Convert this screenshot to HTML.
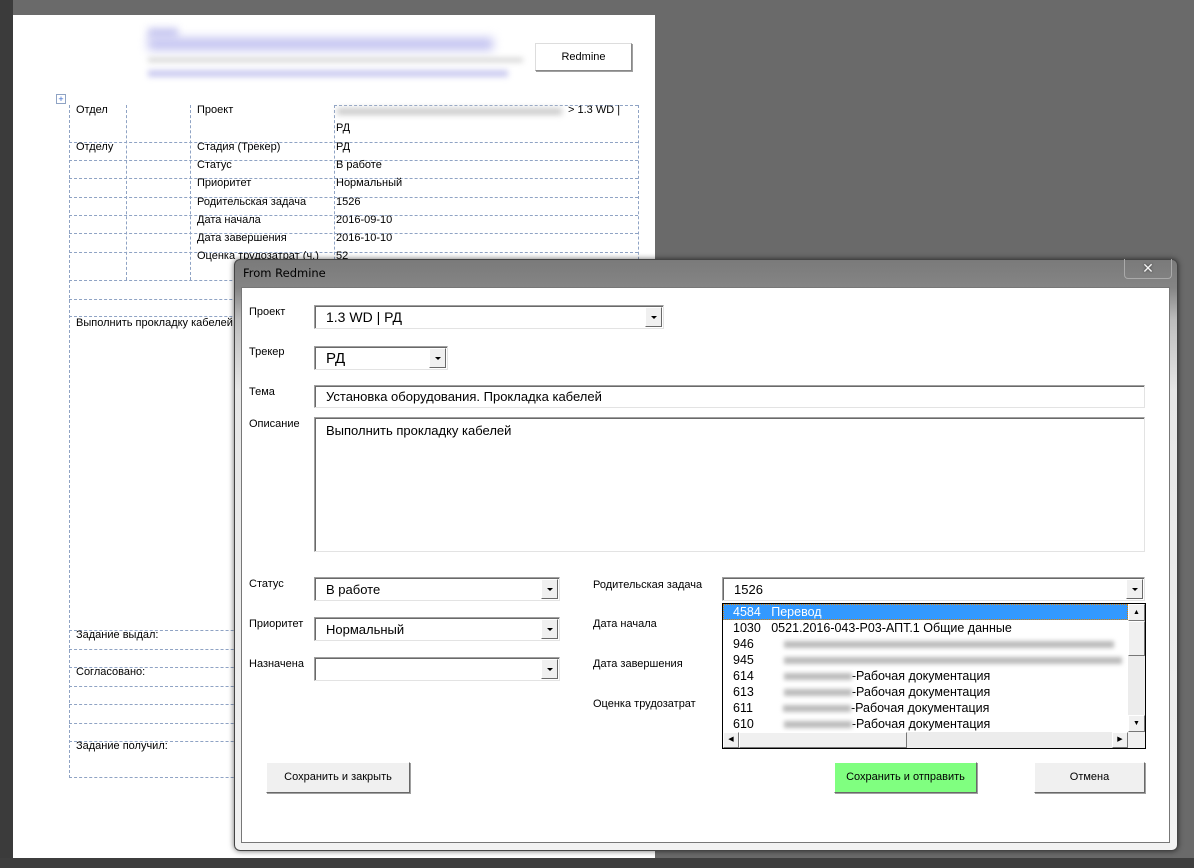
<!DOCTYPE html>
<html><head><meta charset="utf-8"><style>
*{margin:0;padding:0;box-sizing:border-box}
body{width:1194px;height:868px;background:#6a6a6a;position:relative;overflow:hidden;font-family:"Liberation Sans","DejaVu Sans",sans-serif;font-size:11px;color:#000}
.a{position:absolute}
.hl{position:absolute;border-top:1px dashed #8fa3c4;height:0}
.vl{position:absolute;border-left:1px dashed #8fa3c4;width:0}
.t{position:absolute;font-size:11px;white-space:nowrap}
.lbl{position:absolute;font-size:11px;white-space:nowrap}
.box{position:absolute;background:#fff;border:1px solid #a0a0a0;border-right-color:#e3e3e3;border-bottom-color:#e3e3e3;box-shadow:inset 1px 1px 0 #696969}
.box span{position:absolute;left:11px;font-size:14px;white-space:nowrap}
.dd{position:absolute;right:1px;top:1px;bottom:1px;width:17px;background:#f0f0f0;border:1px solid #fff;border-right-color:#696969;border-bottom-color:#696969}
.dd:after{content:"";position:absolute;left:5px;top:8px;border-left:3px solid transparent;border-right:3px solid transparent;border-top:3px solid #000}
.btn{position:absolute;background:#f0f0f0;border:1px solid #fff;border-right-color:#696969;border-bottom-color:#696969;box-shadow:1px 1px 0 #a0a0a0;font-size:11px;text-align:center}
.row{position:absolute;left:10px;height:16px;font-size:12.5px;line-height:16px;white-space:nowrap}
.blur{display:inline-block;background:#bbb;filter:blur(2px);height:7px;vertical-align:middle}
</style></head><body>
<div class="a" style="left:0;top:0;width:13px;height:868px;background:#3b3b3b"></div>
<div class="a" style="left:0;top:858px;width:1194px;height:10px;background:#3e3e3e"></div>
<div class="a" style="left:13px;top:15px;width:642px;height:843px;background:#fff"></div>
<!-- header blur -->
<div class="a" style="left:148px;top:28px;width:30px;height:10px;background:#c8c8f0;filter:blur(4px)"></div>
<div class="a" style="left:148px;top:38px;width:345px;height:12px;background:#c0c0f0;filter:blur(5px)"></div>
<div class="a" style="left:148px;top:58px;width:375px;height:4px;background:#d0d0d0;filter:blur(3px)"></div>
<div class="a" style="left:148px;top:70px;width:360px;height:7px;background:#ccccf0;filter:blur(3px)"></div>
<div class="btn" style="left:535px;top:43px;width:97px;height:28px;line-height:27px;background:#fff;border-color:#ddd #888 #888 #ddd">Redmine</div>
<div class="a" style="left:56px;top:94px;width:10px;height:10px;border:1px solid #8fa3c4;color:#36c;font-size:9px;line-height:8px;text-align:center">+</div>
<!-- table -->
<div class="vl" style="left:69px;top:105px;height:673px"></div>
<div class="vl" style="left:126px;top:105px;height:175px"></div>
<div class="vl" style="left:190px;top:105px;height:175px"></div>
<div class="vl" style="left:334px;top:105px;height:175px"></div>
<div class="vl" style="left:638px;top:105px;height:175px"></div>
<div class="hl" style="left:334px;top:105px;width:304px"></div>
<div class="hl" style="left:69px;top:142px;width:569px"></div>
<div class="hl" style="left:69px;top:160px;width:569px"></div>
<div class="hl" style="left:69px;top:178px;width:569px"></div>
<div class="hl" style="left:69px;top:197px;width:569px"></div>
<div class="hl" style="left:69px;top:215px;width:569px"></div>
<div class="hl" style="left:69px;top:233px;width:569px"></div>
<div class="hl" style="left:69px;top:252px;width:569px"></div>
<div class="hl" style="left:69px;top:280px;width:569px"></div>
<div class="hl" style="left:69px;top:299px;width:569px"></div>
<div class="hl" style="left:69px;top:316px;width:569px"></div>
<div class="hl" style="left:69px;top:630px;width:200px"></div>
<div class="hl" style="left:69px;top:649px;width:200px"></div>
<div class="hl" style="left:69px;top:667px;width:200px"></div>
<div class="hl" style="left:69px;top:686px;width:200px"></div>
<div class="hl" style="left:69px;top:704px;width:200px"></div>
<div class="hl" style="left:69px;top:723px;width:200px"></div>
<div class="hl" style="left:69px;top:741px;width:200px"></div>
<div class="hl" style="left:69px;top:777px;width:200px"></div>
<div class="t" style="left:76px;top:104px">Отдел</div>
<div class="t" style="left:197px;top:104px">Проект</div>
<div class="a" style="left:337px;top:108px;width:225px;height:7px;background:#ccc;filter:blur(3px)"></div>
<div class="t" style="left:568px;top:104px">&gt; 1.3 WD |</div>
<div class="t" style="left:336px;top:122px">РД</div>
<div class="t" style="left:76px;top:141px">Отделу</div>
<div class="t" style="left:197px;top:141px">Стадия (Трекер)</div><div class="t" style="left:336px;top:141px">РД</div>
<div class="t" style="left:197px;top:159px">Статус</div><div class="t" style="left:336px;top:159px">В работе</div>
<div class="t" style="left:197px;top:177px">Приоритет</div><div class="t" style="left:336px;top:177px">Нормальный</div>
<div class="t" style="left:197px;top:196px">Родительская задача</div><div class="t" style="left:336px;top:196px">1526</div>
<div class="t" style="left:197px;top:214px">Дата начала</div><div class="t" style="left:336px;top:214px">2016-09-10</div>
<div class="t" style="left:197px;top:232px">Дата завершения</div><div class="t" style="left:336px;top:232px">2016-10-10</div>
<div class="t" style="left:197px;top:250px">Оценка трудозатрат (ч.)</div><div class="t" style="left:336px;top:250px">52</div>
<div class="t" style="left:76px;top:317px">Выполнить прокладку кабелей</div>
<div class="t" style="left:76px;top:629px">Задание выдал:</div>
<div class="t" style="left:76px;top:666px">Согласовано:</div>
<div class="t" style="left:76px;top:740px">Задание получил:</div>
<!-- dialog -->
<div class="a" style="left:234px;top:259px;width:944px;height:592px;border-radius:6px;border:1px solid #444;background:linear-gradient(180deg,#7a7a7a 0,#858585 28px,#bdbdbd 60px,#e6e6e6 130px,#f2f2f2 100%);box-shadow:0 0 6px rgba(0,0,0,.6)"></div>
<div class="a" style="left:243px;top:266px;font-family:'DejaVu Sans',sans-serif;font-size:11.5px;color:#000">From Redmine</div>
<div class="a" style="left:1124px;top:259px;width:48px;height:20px;border:1px solid #aaa;border-top:none;border-radius:0 0 4px 4px;color:#f4f4f4;font-weight:bold;font-size:14px;text-align:center;line-height:18px;text-shadow:0 0 2px #333">✕</div>
<div class="a" style="left:241px;top:287px;width:929px;height:556px;background:#fff;border:1px solid #777"></div>

<div class="lbl" style="left:249px;top:306px">Проект</div>
<div class="box" style="left:314px;top:305px;width:350px;height:24px"><span style="top:3px">1.3 WD | РД</span><div class="dd"></div></div>
<div class="lbl" style="left:249px;top:346px">Трекер</div>
<div class="box" style="left:314px;top:346px;width:134px;height:24px"><span style="top:3px;font-size:15px">РД</span><div class="dd"></div></div>
<div class="lbl" style="left:249px;top:386px">Тема</div>
<div class="box" style="left:314px;top:385px;width:831px;height:23px"><span style="top:3px;font-size:13px">Установка оборудования. Прокладка кабелей</span></div>
<div class="lbl" style="left:249px;top:418px">Описание</div>
<div class="box" style="left:314px;top:417px;width:831px;height:135px"><span style="top:5px;font-size:13px">Выполнить прокладку кабелей</span></div>

<div class="lbl" style="left:249px;top:578px">Статус</div>
<div class="box" style="left:314px;top:577px;width:246px;height:24px"><span style="top:4px;font-size:13px">В работе</span><div class="dd"></div></div>
<div class="lbl" style="left:249px;top:618px">Приоритет</div>
<div class="box" style="left:314px;top:617px;width:246px;height:24px"><span style="top:4px;font-size:13px">Нормальный</span><div class="dd"></div></div>
<div class="lbl" style="left:249px;top:658px">Назначена</div>
<div class="box" style="left:314px;top:657px;width:246px;height:24px"><div class="dd"></div></div>

<div class="lbl" style="left:593px;top:579px">Родительская задача</div>
<div class="lbl" style="left:593px;top:618px">Дата начала</div>
<div class="lbl" style="left:593px;top:658px">Дата завершения</div>
<div class="lbl" style="left:593px;top:698px">Оценка трудозатрат</div>
<div class="box" style="left:722px;top:577px;width:423px;height:24px"><span style="top:4px;font-size:13px">1526</span><div class="dd"></div></div>

<div class="a" style="left:722px;top:603px;width:424px;height:146px;border:1px solid #000;background:#fff;overflow:hidden">
 <div class="a" style="left:0;top:0;width:405px;height:16px;background:#3399ff;outline:1px dotted #e08000;outline-offset:-1px"></div>
 <div class="row" style="top:0;color:#fff">4584&nbsp;&nbsp;&nbsp;Перевод</div>
 <div class="row" style="top:16px">1030&nbsp;&nbsp;&nbsp;0521.2016-043-Р03-АПТ.1 Общие данные</div>
 <div class="row" style="top:32px">946<span class="blur" style="margin-left:30px;width:330px"></span></div>
 <div class="row" style="top:48px">945<span class="blur" style="margin-left:30px;width:338px"></span></div>
 <div class="row" style="top:64px">614<span class="blur" style="margin-left:30px;width:68px"></span>-Рабочая документация</div>
 <div class="row" style="top:80px">613<span class="blur" style="margin-left:30px;width:68px"></span>-Рабочая документация</div>
 <div class="row" style="top:96px">611<span class="blur" style="margin-left:30px;width:68px"></span>-Рабочая документация</div>
 <div class="row" style="top:112px">610<span class="blur" style="margin-left:30px;width:68px"></span>-Рабочая документация</div>
 <div class="a" style="left:405px;top:0;width:17px;height:128px;background:#ececec"></div>
 <div class="a" style="left:405px;top:0;width:17px;height:17px;background:#f0f0f0;border:1px solid #fff;border-right-color:#777;border-bottom-color:#777;font-size:7px;text-align:center;line-height:15px">▲</div>
 <div class="a" style="left:405px;top:17px;width:17px;height:35px;background:#f0f0f0;border:1px solid #fff;border-right-color:#777;border-bottom-color:#777"></div>
 <div class="a" style="left:405px;top:111px;width:17px;height:17px;background:#f0f0f0;border:1px solid #fff;border-right-color:#777;border-bottom-color:#777;font-size:7px;text-align:center;line-height:15px">▼</div>
 <div class="a" style="left:0;top:128px;width:405px;height:16px;background:#ececec"></div>
 <div class="a" style="left:0;top:128px;width:16px;height:16px;background:#f0f0f0;border:1px solid #fff;border-right-color:#777;border-bottom-color:#777;font-size:7px;text-align:center;line-height:14px">◀</div>
 <div class="a" style="left:16px;top:128px;width:168px;height:16px;background:#f0f0f0;border:1px solid #fff;border-right-color:#777;border-bottom-color:#777"></div>
 <div class="a" style="left:389px;top:128px;width:16px;height:16px;background:#f0f0f0;border:1px solid #fff;border-right-color:#777;border-bottom-color:#777;font-size:7px;text-align:center;line-height:14px">▶</div>
 <div class="a" style="left:405px;top:128px;width:17px;height:16px;background:#f0f0f0"></div>
</div>

<div class="btn" style="left:266px;top:762px;width:144px;height:31px;line-height:29px">Сохранить и закрыть</div>
<div class="btn" style="left:834px;top:762px;width:143px;height:31px;line-height:29px;background:#80ff80">Сохранить и отправить</div>
<div class="btn" style="left:1034px;top:762px;width:111px;height:31px;line-height:29px">Отмена</div>
</body></html>
